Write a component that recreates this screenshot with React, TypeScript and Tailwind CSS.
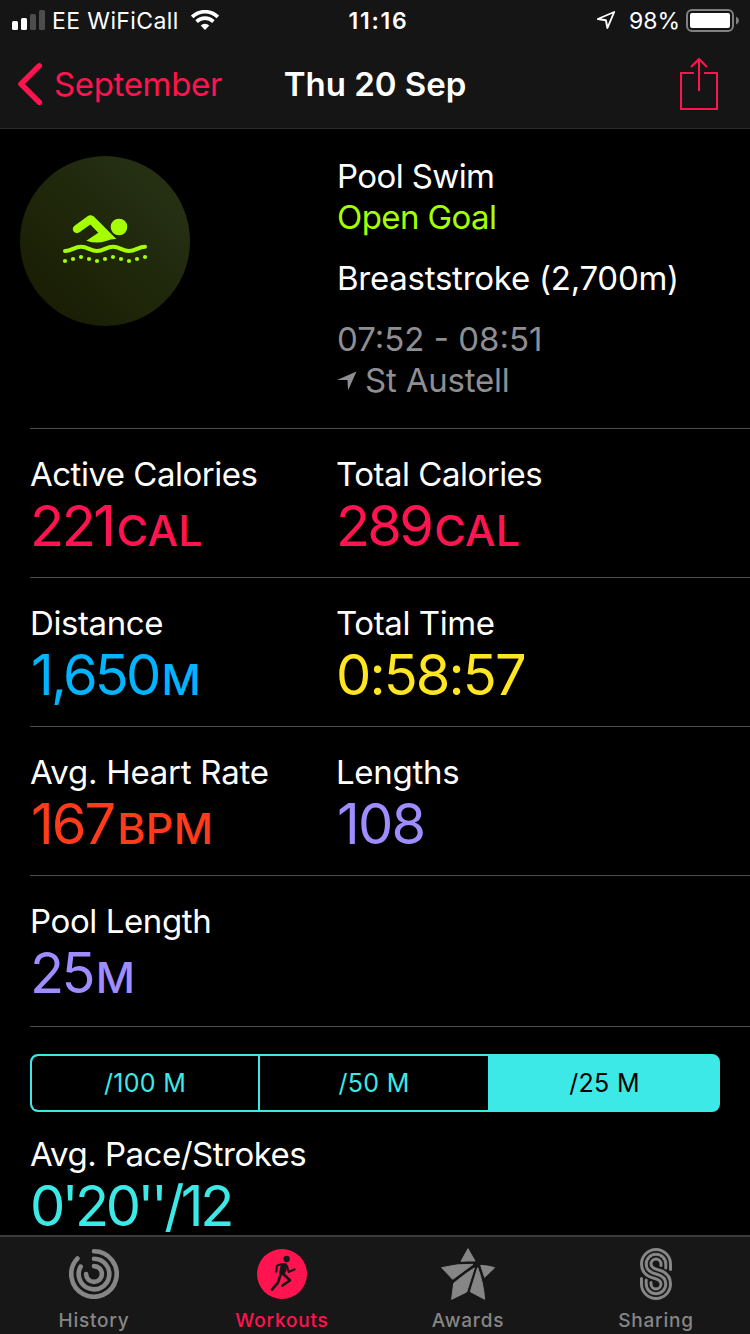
import type { ReactNode } from 'react';

const StatusBar = () => (
  <div className="flex h-10 items-center pl-3 pr-[11px] text-[23px] text-white">
    <div className="flex flex-1 items-center">
      <svg width="34" height="22" viewBox="0 0 34 22" fill="#fff">
        <rect x="0" y="12" width="6" height="9" rx="1.5" />
        <rect x="9" y="9" width="6" height="12" rx="1.5" />
        <rect x="18" y="5" width="6" height="16" rx="1.5" fill="#4d4d4d" />
        <rect x="27" y="1" width="6" height="20" rx="1.5" fill="#4d4d4d" />
      </svg>
      <span className="ml-[6px] w-[139px] pt-[2px] tracking-[0.4px]">EE WiFiCall</span>
      <svg width="28" height="20" viewBox="0 0 28 20" fill="none" stroke="#fff" strokeWidth="3.6">
        <path d="M1.2 6.9a18.2 18.2 0 0 1 25.6 0" />
        <path d="M5.6 11.6a12 12 0 0 1 16.8 0" />
        <path d="M14 20l-4.3-4.4a6.2 6.2 0 0 1 8.6 0z" fill="#fff" stroke="none" />
      </svg>
    </div>
    <span className="pl-[6px] pt-[2px] font-semibold tracking-[1.8px]">11:16</span>
    <div className="flex flex-1 items-center justify-end">
      <svg width="20" height="20" viewBox="0 0 20 20" fill="none" stroke="#fff" strokeWidth="1.9" strokeLinejoin="round">
        <path d="M18.2 2L1.8 9l8.1 1.2 1.5 7.8z" />
      </svg>
      <span className="ml-[13px] pt-[2px]">98%</span>
      <svg className="ml-[6px]" width="53" height="23" viewBox="0 0 53 23">
        <rect x="1" y="1" width="46" height="21" rx="5" fill="none" stroke="#808080" strokeWidth="2" />
        <rect x="4" y="4" width="40" height="15" rx="2" fill="#fff" />
        <path d="M50 7.5q3 1.5 3 4t-3 4z" fill="#808080" />
      </svg>
    </div>
  </div>
);

const NavBar = () => (
  <div className="flex h-[88px] items-center px-[17px] text-[33px]">
    <div className="flex flex-1 items-center text-[#ff1450]">
      <svg width="26" height="44" viewBox="0 0 26 44" fill="none" stroke="currentColor" strokeWidth="5.5" strokeLinecap="round" strokeLinejoin="round">
        <path d="M22.3 3.8L4 22l18.3 18.2" />
      </svg>
      <span className="ml-[11px] pt-[2px] tracking-[-0.35px]">September</span>
    </div>
    <span className="pt-[2px] font-semibold text-white">Thu 20 Sep</span>
    <div className="flex flex-1 justify-end">
      <svg className="mr-[14px]" width="40" height="54" viewBox="0 0 40 54" fill="none" stroke="#ff1450" strokeWidth="2">
        <path d="M15 16H2v36h36V16H25M20 34V2M12 10l8-8 8 8" />
      </svg>
    </div>
  </div>
);

const SwimBadge = () => (
  <div className="flex size-[170px] items-center justify-center rounded-full bg-linear-to-tr from-[#171b02] to-[#283417] pb-1">
    <svg width="86" height="50" viewBox="156 207 258 150" fill="#a6ff00">
      <circle cx="327" cy="246" r="25" />
      <path d="M201 252L241 223" stroke="#a6ff00" strokeWidth="25" strokeLinecap="round" />
      <path d="M250 213L319 282Q304 281 288 288Q260 298 229 287L265 263L236 233Z" />
      <path
        d="M165 318C185 318 193 305 213 305S241 318 261 318S289 305 309 305S337 318 357 318S385 305 405 305"
        fill="none"
        stroke="#a6ff00"
        strokeWidth="12"
        strokeLinecap="round"
      />
      {[348, 342, 336, 342, 348, 342, 336, 342, 348, 342, 336].map((y, i) => (
        <circle key={i} cx={165 + i * 24} cy={y} r="6.3" />
      ))}
    </svg>
  </div>
);

interface StatProps {
  label: string;
  value: string;
  unit?: string;
  labelClass?: string;
  valueClass: string;
}

const Stat: React.FC<StatProps> = ({ label, value, unit, labelClass, valueClass }) => (
  <div className="w-[306px]">
    <div className={`h-[41px] whitespace-nowrap leading-[41px] text-white ${labelClass ?? 'tracking-[-0.4px]'}`}>
      {label}
    </div>
    <div className={`h-[62px] whitespace-nowrap text-[56px] leading-[62px] ${valueClass}`}>
      {value}
      {unit && <span className="ml-[3px] text-[43px] font-medium tracking-[0.3px]">{unit}</span>}
    </div>
  </div>
);

const StatRow = ({ children }: { children: ReactNode }) => (
  <div className="ml-[30px] flex h-[149px] border-b border-[#4c4c4e] pt-[25px] last-of-type:h-[151px]">{children}</div>
);

const HistoryIcon = () => (
  <svg width="50" height="50" viewBox="-25 -25 50 50" fill="none" stroke="currentColor" strokeWidth="4.6" strokeLinecap="round">
    <path d="M0 -22.7A22.7 22.7 0 1 1 -16.6 -15.5" />
    <path d="M0 -15.3A15.3 15.3 0 1 1 -13.4 -7.4" />
    <path d="M0 -7.9A7.9 7.9 0 1 1 -7.9 0" />
  </svg>
);

const WorkoutsIcon = () => (
  <svg width="50" height="50" viewBox="651 57 150 150" fill="none" stroke="#171717" strokeLinecap="round" strokeLinejoin="round">
    <circle cx="726" cy="132" r="75" fill="#ff1450" stroke="none" />
    <circle cx="740" cy="87" r="9.5" fill="#171717" stroke="none" />
    <path d="M722 103L711 107L709 125M741 108L746 126L764 118" strokeWidth="6" />
    <path d="M726 102L738 103L736 122L730 134L720 131Z" fill="#171717" strokeWidth="6" />
    <path d="M722 133L714 158L696 179M731 133L750 151L727 167" strokeWidth="8" />
  </svg>
);

const AwardsIcon = () => (
  <svg width="56" height="54" viewBox="60 54 168 162" fill="currentColor" stroke="currentColor" strokeWidth="3" strokeLinejoin="round">
    <path d="M144 59L165 96Q143 95 123 97Z" />
    <path d="M65 116Q112 104 159 106L98 151Z" />
    <path d="M163 117L140 189L95 211L101 163Q135 134 163 117Z" />
    <path d="M173 116Q190 160 194 211L151 188Z" />
    <path d="M182 109Q204 110 224 116L194 145Z" />
  </svg>
);

const SharingIcon = () => (
  <svg width="32" height="52" viewBox="0 0 32 52" fill="none" stroke="currentColor" strokeWidth="3" strokeLinecap="round">
    <path d="M30.5 21.5V16A14.5 14.5 0 0 0 1.5 16C1.5 25 8 28.8 14 30.3C18 31.3 21 32.5 21 36A5 5 0 0 1 11 36V34.5" />
    <path d="M25.8 20V16A9.8 9.8 0 0 0 6.2 16C6.2 22 10 24.5 16 26C22 27.5 25.8 30 25.8 36A9.8 9.8 0 0 1 6.2 36V32" />
    <path
      transform="rotate(180 16 26)"
      d="M30.5 21.5V16A14.5 14.5 0 0 0 1.5 16C1.5 25 8 28.8 14 30.3C18 31.3 21 32.5 21 36A5 5 0 0 1 11 36V34.5"
    />
  </svg>
);

const tabs = [
  { name: 'History', icon: <HistoryIcon />, className: 'w-[188px] text-[#868686]' },
  { name: 'Workouts', icon: <WorkoutsIcon />, className: 'w-[188px] text-[#ff1450]' },
  { name: 'Awards', icon: <AwardsIcon />, className: 'w-[184px] text-[#868686]' },
  { name: 'Sharing', icon: <SharingIcon />, className: 'w-[190px] pl-0.5 text-[#868686]' },
];

const App = () => {
  return (
    <div className="flex h-[1334px] w-[750px] flex-col overflow-hidden bg-black font-[Inter,sans-serif] text-[33px]">
      <header className="h-[129px] shrink-0 border-b border-[#2a2a2c] bg-[#151515]">
        <StatusBar />
        <NavBar />
      </header>

      <main className="h-[1106px] shrink-0">
        <section className="flex h-[299px] pl-5 pt-[27px]">
          <SwimBadge />
          <div className="ml-[147px] whitespace-nowrap leading-[41px] text-white">
            <p className="tracking-[-0.6px]">Pool Swim</p>
            <p className="tracking-[-0.6px] text-[#a6ff00]">Open Goal</p>
            <p className="mt-5 tracking-[-0.25px]">Breaststroke (2,700m)</p>
            <p className="mt-5 text-[#8e8e93]">07:52 - 08:51</p>
            <p className="flex items-center tracking-[-0.2px] text-[#8e8e93]">
              <svg className="mr-[8px]" width="20" height="20" viewBox="0 0 20 20" fill="currentColor">
                <path d="M19.5 .5L0 9h10.5l.5 10.5z" />
              </svg>
              St Austell
            </p>
          </div>
        </section>
        <div className="ml-[30px] h-px bg-[#4c4c4e]" />

        <section>
          <StatRow>
            <Stat label="Active Calories" labelClass="tracking-[-0.5px]" value="221" unit="CAL" valueClass="tracking-[-2.5px] text-[#ff1450]" />
            <Stat label="Total Calories" labelClass="tracking-[-0.5px]" value="289" unit="CAL" valueClass="tracking-[-2.8px] text-[#ff1450]" />
          </StatRow>
          <StatRow>
            <Stat label="Distance" value="1,650" unit="M" valueClass="pl-px tracking-[-2.8px] text-[#00b4ff]" />
            <Stat label="Total Time" value="0:58:57" valueClass="tracking-[-1.9px] text-[#ffe620]" />
          </StatRow>
          <StatRow>
            <Stat label="Avg. Heart Rate" labelClass="tracking-[-0.25px]" value="167" unit="BPM" valueClass="pl-px tracking-[-2px] text-[#ff3b1a]" />
            <Stat label="Lengths" labelClass="tracking-[-0.3px]" value="108" valueClass="pl-px tracking-[-1.8px] text-[#9f8cff]" />
          </StatRow>
          <StatRow>
            <Stat label="Pool Length" value="25" unit="M" valueClass="tracking-[-2.7px] text-[#9f8cff]" />
          </StatRow>
        </section>

        <div className="mx-[30px] mt-[27px] flex h-[58px] overflow-hidden rounded-lg border-2 border-[#3ce9e6] bg-[#3ce9e6] text-[25px] tracking-[0.3px] text-[#3ce9e6]">
          <div className="flex w-[228px] items-center justify-center rounded-l-md border-r-2 border-[#3ce9e6] bg-black pt-[2px]">/100 M</div>
          <div className="flex w-[228px] items-center justify-center bg-black pt-[2px]">/50 M</div>
          <div className="flex flex-1 items-center justify-center pl-[3px] pt-[2px] text-black">/25 M</div>
        </div>
        <div className="ml-[30px] mt-[22px]">
          <Stat label="Avg. Pace/Strokes" labelClass="tracking-[-0.5px]" value="0'20''/12" valueClass="tracking-[-3.5px] text-[#3ce9e6]" />
        </div>
      </main>

      <nav className="flex h-[99px] border-t-2 border-[#3c3c3e] bg-[#171717] text-[19px] font-medium">
        {tabs.map((tab) => (
          <div key={tab.name} className={`flex flex-col items-center ${tab.className}`}>
            <div className="mt-[9px] flex h-[56px] items-center">{tab.icon}</div>
            <span className="mt-[7px] leading-6 tracking-[0.8px]">{tab.name}</span>
          </div>
        ))}
      </nav>
    </div>
  );
};

export default App;
